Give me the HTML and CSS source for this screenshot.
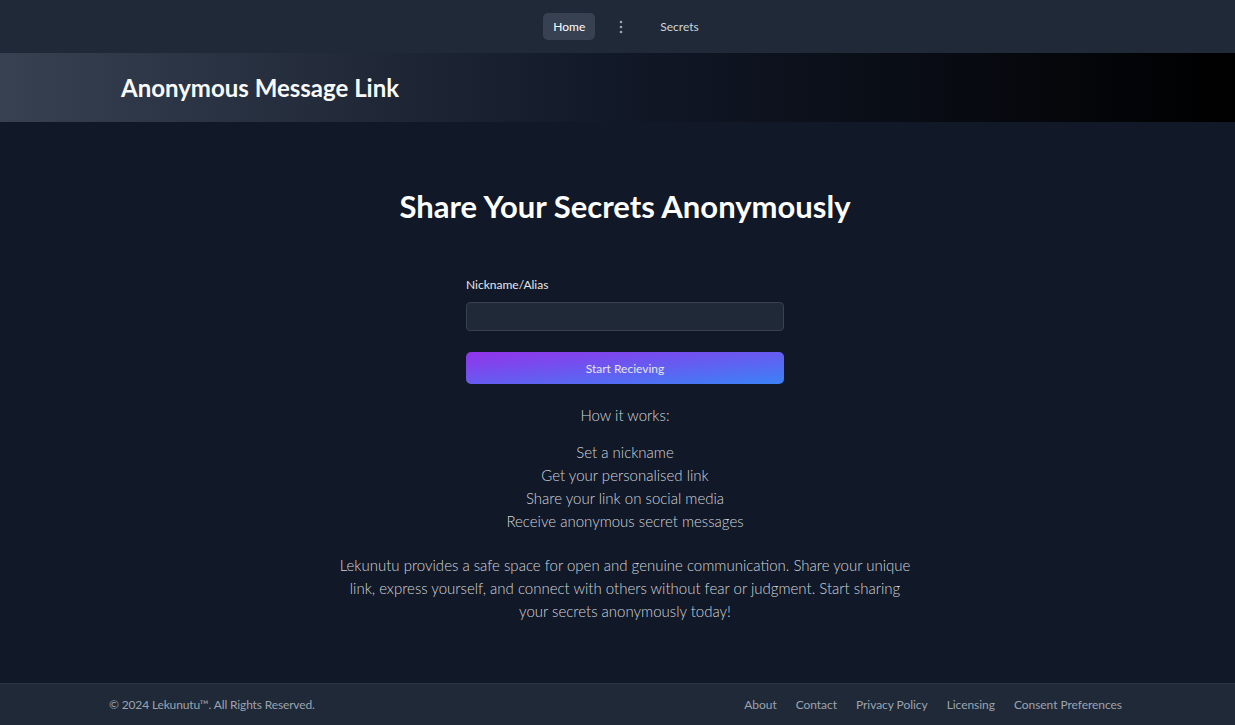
FILE: index.html
```html
<!DOCTYPE html>
<html lang="en">
<head>
<meta charset="utf-8">
<title>Anonymous Message Link</title>
<link rel="stylesheet" href="styles.css">
</head>
<body>
<nav class="topnav">
  <a class="nav-link active" href="#">Home</a>
  <span class="kebab" aria-hidden="true">
    <svg width="4" height="14" viewBox="0 0 4 14"><circle cx="2" cy="2" r="1.3" fill="#9ca3af"/><circle cx="2" cy="7" r="1.3" fill="#9ca3af"/><circle cx="2" cy="12" r="1.3" fill="#9ca3af"/></svg>
  </span>
  <a class="nav-link" href="#">Secrets</a>
</nav>
<header class="banner">
  <h1 class="banner-title">Anonymous Message Link</h1>
</header>
<main class="main">
  <section class="content">
    <h2 class="headline">Share Your Secrets Anonymously</h2>
    <form class="form">
      <label class="label" for="nick">Nickname/Alias</label>
      <input class="input" id="nick" type="text">
      <button class="btn" type="button">Start Recieving</button>
    </form>
    <p class="how">How it works:</p>
    <ul class="steps">
      <li>Set a nickname</li>
      <li>Get your personalised link</li>
      <li>Share your link on social media</li>
      <li>Receive anonymous secret messages</li>
    </ul>
    <p class="desc">Lekunutu provides a safe space for open and genuine communication. Share your unique link, express yourself, and connect with others without fear or judgment. Start sharing your secrets anonymously today!</p>
  </section>
</main>
<footer class="footer">
  <span class="copy">© 2024 Lekunutu™. All Rights Reserved.</span>
  <nav class="footer-links">
    <a href="#">About</a>
    <a href="#">Contact</a>
    <a href="#">Privacy Policy</a>
    <a href="#">Licensing</a>
    <a href="#">Consent Preferences</a>
  </nav>
</footer>
</body>
</html>
```
FILE: styles.css
```css
* { box-sizing: border-box; }
html, body { margin: 0; padding: 0; }
body {
  background: #111827;
  font-family: Lato, "Open Sans", "Liberation Sans", sans-serif;
  color: #fff;
  height: 725px;
  display: flex;
  flex-direction: column;
}
a { text-decoration: none; }

.topnav {
  height: 53px;
  background: #1f2937;
  display: flex;
  align-items: center;
  justify-content: center;
  padding-left: 17px;
}
.nav-link {
  font-size: 12px;
  color: #d1d5db;
  padding: 6px 10px;
  border-radius: 5px;
  line-height: 15px;
}
.nav-link.active {
  background: #374151;
  color: #fff;
}
.kebab {
  display: flex;
  align-items: center;
  margin: 0 27px 0 24px;
}

.banner {
  height: 69px;
  background: linear-gradient(to right, #374151, #111827, #000);
  display: flex;
  align-items: center;
  padding-left: 121px;
}
.banner-title {
  margin: 0;
  font-size: 24px;
  font-weight: 700;
  color: #f9fafb;
}

.main {
  flex: 1;
  display: flex;
  justify-content: center;
  padding-left: 15px;
}
.content {
  width: 580px;
  display: flex;
  flex-direction: column;
  align-items: center;
  text-align: center;
  padding-top: 64px;
}
.headline {
  margin: 0;
  font-size: 31px;
  font-weight: 700;
  line-height: 40px;
  color: #fff;
}
.form {
  width: 318px;
  display: flex;
  flex-direction: column;
  align-items: stretch;
  text-align: left;
  margin-top: 51px;
}
.label {
  font-size: 12px;
  color: #e5e7eb;
  line-height: 16px;
}
.input {
  margin-top: 9px;
  height: 29px;
  background: #1f2937;
  border: 1px solid #374151;
  border-radius: 4px;
  color: #fff;
}
.btn {
  margin-top: 21px;
  height: 32px;
  border: none;
  border-radius: 5px;
  background: linear-gradient(to bottom right, #9333ea, #3b82f6);
  color: #e5e7eb;
  font-family: inherit;
  font-size: 12px;
}
.how {
  margin: 21px 0 0;
  font-size: 15px;
  font-weight: 300;
  color: #d1d5db;
  line-height: 20px;
}
.steps {
  list-style: none;
  margin: 16px 0 0;
  padding: 0;
  font-size: 15px;
  font-weight: 300;
  color: #d1d5db;
  line-height: 23px;
}
.desc {
  margin: 21px 0 0;
  font-size: 15px;
  font-weight: 300;
  color: #d1d5db;
  line-height: 23px;
}

.footer {
  height: 42px;
  background: #1f2937;
  border-top: 1px solid #2b3544;
  display: flex;
  align-items: center;
  justify-content: space-between;
  padding: 0 113px 0 109px;
  font-size: 12px;
  color: #9ca3af;
}
.copy { letter-spacing: -0.15px; }
.footer-links {
  display: flex;
  gap: 19px;
}
.footer-links a {
  color: #9ca3af;
  letter-spacing: -0.05px;
}
```
